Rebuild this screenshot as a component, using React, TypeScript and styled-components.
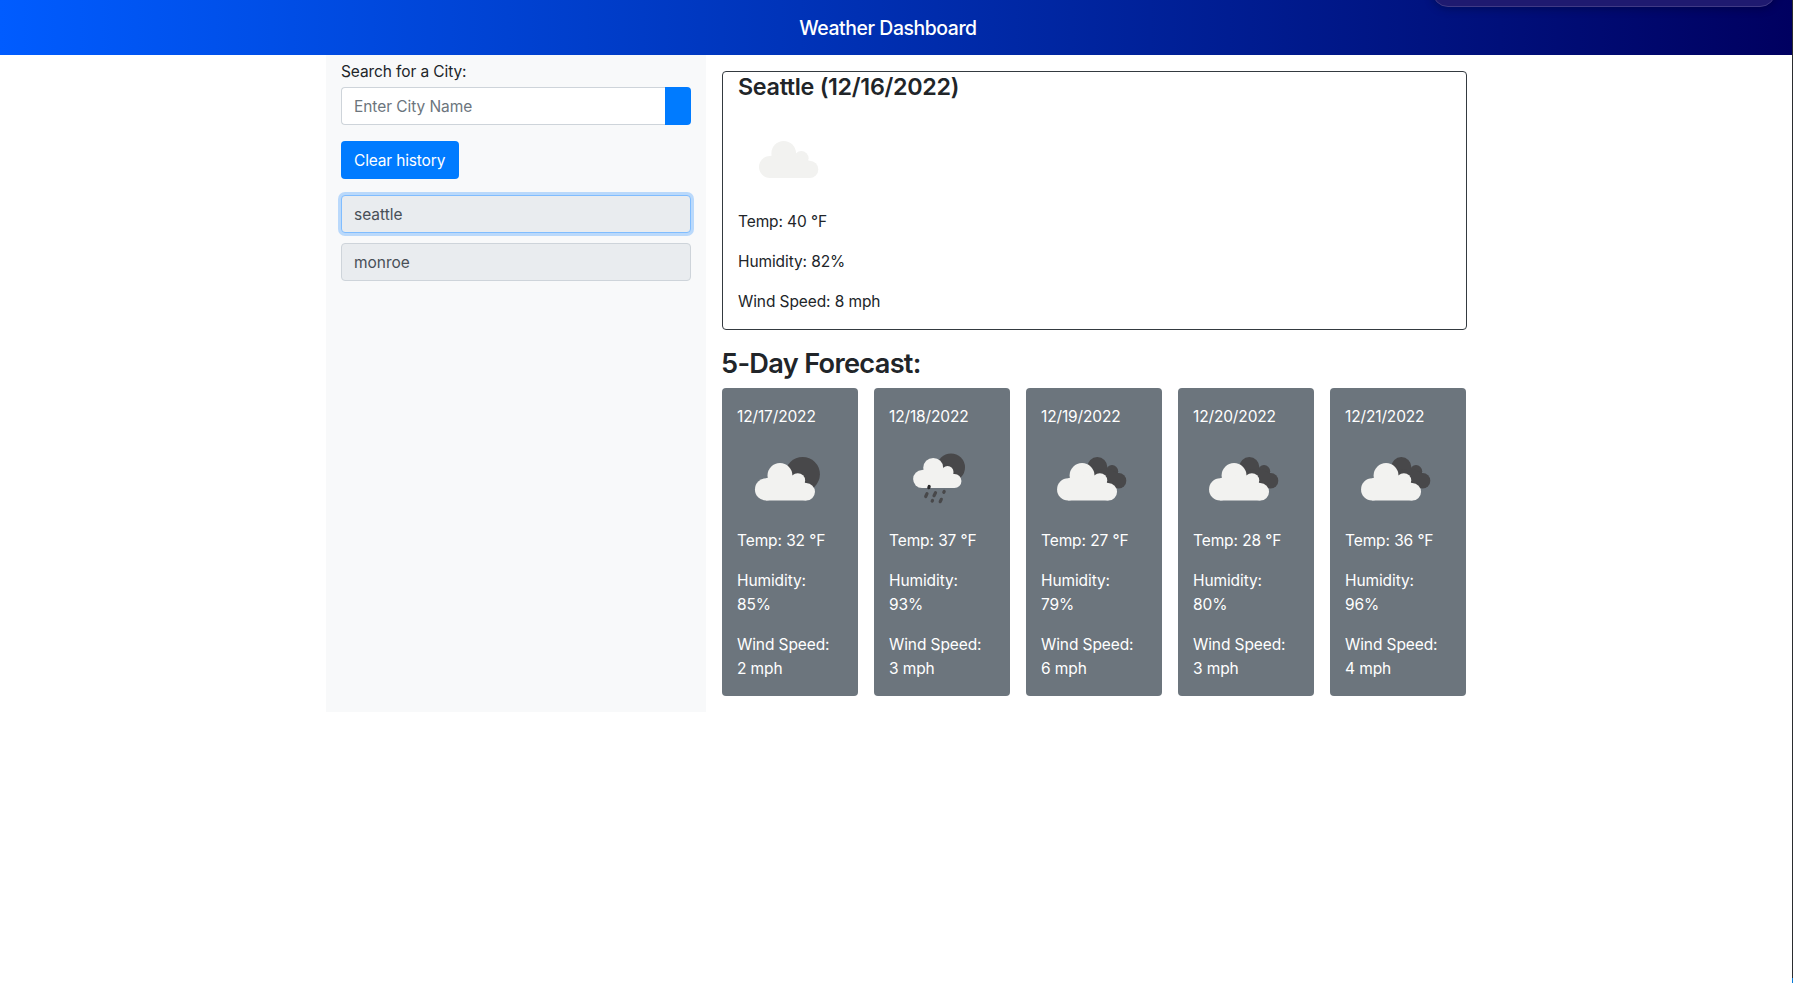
import React from 'react';
import styled, { createGlobalStyle } from 'styled-components';

const GlobalStyle = createGlobalStyle`
  *, *::before, *::after { box-sizing: border-box; }
  body {
    margin: 0;
    background: #fff;
    color: #212529;
    font: 400 15.5px/24px Inter, "Liberation Sans", sans-serif;
    letter-spacing: -0.1px;
    overflow: hidden;
  }
`;

const Page = styled.div`
  position: relative;
  min-height: 983px;
`;

const Header = styled.header`
  display: flex;
  align-items: center;
  justify-content: center;
  height: 55px;
  padding-right: 17px;
  background: linear-gradient(to right, #005cff, #000060);
`;

const Brand = styled.h1`
  margin: 0;
  color: #fff;
  font-size: 19.4px;
  line-height: 30px;
  font-weight: 550;
  letter-spacing: -0.42px;
`;

const WindowOverlay = styled.div`
  position: absolute;
  top: -33px;
  right: 17px;
  width: 344px;
  height: 40px;
  border: 1px solid #403a85;
  border-radius: 16px;
  background: #1f1a70;
  box-shadow: 0 2px 8px rgba(0, 0, 0, 0.25);
`;

const WindowEdge = styled.div`
  position: absolute;
  top: 0;
  right: 0;
  width: 1px;
  height: 983px;
  background: linear-gradient(#2b2d30 978px, #0a7bd8 978px);
`;

const Container = styled.main`
  display: flex;
  width: 1141px;
  margin-left: 326px;
`;

const Sidebar = styled.aside`
  width: 380px;
  height: 656.5px;
  padding: 5px 15px 0;
  background: #f8f9fa;
`;

const SearchLabel = styled.label`
  display: block;
  margin-bottom: 3px;
`;

const SearchGroup = styled.div`
  display: flex;
  height: 38px;
  margin-bottom: 16px;
`;

const SearchInput = styled.input`
  flex: 1;
  min-width: 0;
  padding: 7px 12px 5px;
  border: 1px solid #ced4da;
  border-right: 0;
  border-radius: 4px 0 0 4px;
  background: #fff;
  font: inherit;
  letter-spacing: -0.06px;
  outline: none;
  &::placeholder { color: #6c757d; opacity: 1; }
`;

const SearchButton = styled.button`
  width: 26px;
  border: 0;
  border-radius: 0 4px 4px 0;
  background: #007bff;
`;

const ClearButton = styled.button`
  display: block;
  width: 117.6px;
  height: 38px;
  margin-bottom: 16px;
  padding: 2px 0 0 13px;
  border: 0;
  border-radius: 4px;
  background: #007bff;
  color: #fff;
  font: inherit;
  letter-spacing: -0.16px;
  text-align: left;
`;

const HistoryItem = styled.div<{ $focused?: boolean }>`
  height: 38px;
  margin-bottom: 10px;
  padding: 7px 12px 5px;
  border: 1px solid ${(p) => (p.$focused ? '#80bdff' : '#ced4da')};
  border-radius: 4px;
  background: #e9ecef;
  color: #495057;
  letter-spacing: -0.02px;
  box-shadow: ${(p) => (p.$focused ? '0 0 0 3px rgba(0, 123, 255, 0.25)' : 'none')};
`;

const Results = styled.section`
  flex: 1;
  padding: 16px 0 0 16px;
`;

const CurrentCard = styled.article`
  height: 259px;
  padding: 0 15px;
  border: 1px solid #343a40;
  border-radius: 4px;
`;

const CityTitle = styled.h2`
  margin: 0 0 8px;
  font-size: 23.3px;
  line-height: 29px;
  font-weight: 560;
  letter-spacing: -0.3px;
`;

const CurrentMetrics = styled.div`
  padding-top: 1px;
`;

const ForecastTitle = styled.h2`
  margin: 17px 0 7px -1px;
  font-size: 27.2px;
  line-height: 33.6px;
  font-weight: 560;
  letter-spacing: -0.7px;
`;

const Metric = styled.p`
  margin: 0 0 16px;
`;

const ForecastRow = styled.div`
  display: grid;
  grid-template-columns: repeat(5, 136px);
  column-gap: 16px;
`;

const DayCard = styled.article`
  height: 308px;
  padding: 17px 20px 0 15px;
  border-radius: 4px;
  background: #6c757d;
  color: #fff;
`;

const DayDate = styled.div`
  letter-spacing: -0.14px;
`;

const Icon = styled.svg`
  display: block;
  width: 100px;
  height: 100px;
`;

type Condition = 'cloud' | 'few' | 'rain' | 'broken';

const Cloud = ({ transform }: { transform?: string }) => (
  <g transform={transform} fill="#f2f2f0">
    <circle cx="32" cy="58" r="11" />
    <circle cx="45.7" cy="44.3" r="12.3" />
    <circle cx="63.3" cy="49.3" r="7.3" />
    <circle cx="71.7" cy="60.4" r="8.6" />
    <path d="M32 47L45.7 44L63.3 48L71.7 52V69H32Z" />
  </g>
);

const WeatherIcon = ({ kind }: { kind: Condition }) => (
  <Icon viewBox="0 0 100 100" aria-hidden>
    {kind === 'cloud' && <Cloud />}
    {kind === 'few' && (
      <>
        <circle cx="65.6" cy="45.2" r="17.3" fill="#48484a" />
        <Cloud transform="translate(-3.3 1.7) scale(1.012)" />
      </>
    )}
    {kind === 'broken' && (
      <>
        <g fill="#48484a">
          <circle cx="56.3" cy="38" r="10" />
          <circle cx="71" cy="42.3" r="6.2" />
          <circle cx="77.6" cy="51.8" r="7.7" />
          <path d="M56 40L71 41L77.6 44.5V59H56Z" />
        </g>
        <Cloud transform="translate(-5.2 1.7) scale(1.012)" />
      </>
    )}
    {kind === 'rain' && (
      <>
        <circle cx="62" cy="38.4" r="14" fill="#48484a" />
        <Cloud transform="translate(7 2.8) scale(0.815)" />
        <g stroke="#48484a" strokeWidth="3.2" strokeLinecap="round" transform="translate(0 -0.5)">
          <path d="M40.2 58L39.8 59.2" stroke="#2a2a2c" />
          <path d="M38 65.2L36.7 68" />
          <path d="M46.5 64.2L45 67.2" />
          <path d="M55.2 63L54.8 63.8" />
          <path d="M43.5 72L43.2 72.6" />
          <path d="M52.3 70.8L51.2 73.2" />
        </g>
      </>
    )}
  </Icon>
);

const days: { date: string; kind: Condition; temp: number; humidity: number; wind: number }[] = [
  { date: '12/17/2022', kind: 'few', temp: 32, humidity: 85, wind: 2 },
  { date: '12/18/2022', kind: 'rain', temp: 37, humidity: 93, wind: 3 },
  { date: '12/19/2022', kind: 'broken', temp: 27, humidity: 79, wind: 6 },
  { date: '12/20/2022', kind: 'broken', temp: 28, humidity: 80, wind: 3 },
  { date: '12/21/2022', kind: 'broken', temp: 36, humidity: 96, wind: 4 },
];

export default function App() {
  return (
    <Page>
      <GlobalStyle />
      <Header>
        <Brand>Weather Dashboard</Brand>
      </Header>
      <WindowOverlay />
      <Container>
        <Sidebar>
          <SearchLabel htmlFor="city">Search for a City:</SearchLabel>
          <SearchGroup>
            <SearchInput id="city" placeholder="Enter City Name" />
            <SearchButton aria-label="Search" />
          </SearchGroup>
          <ClearButton>Clear history</ClearButton>
          <HistoryItem $focused>seattle</HistoryItem>
          <HistoryItem>monroe</HistoryItem>
        </Sidebar>
        <Results>
          <CurrentCard>
            <CityTitle>Seattle (12/16/2022)</CityTitle>
            <WeatherIcon kind="cloud" />
            <CurrentMetrics>
              <Metric>Temp: 40 °F</Metric>
              <Metric>Humidity: 82%</Metric>
              <Metric>Wind Speed: 8 mph</Metric>
            </CurrentMetrics>
          </CurrentCard>
          <ForecastTitle>5-Day Forecast:</ForecastTitle>
          <ForecastRow>
            {days.map((d) => (
              <DayCard key={d.date}>
                <DayDate>{d.date}</DayDate>
                <WeatherIcon kind={d.kind} />
                <Metric>Temp: {d.temp} °F</Metric>
                <Metric>Humidity: {d.humidity}%</Metric>
                <Metric>Wind Speed: {d.wind} mph</Metric>
              </DayCard>
            ))}
          </ForecastRow>
        </Results>
      </Container>
      <WindowEdge />
    </Page>
  );
}
